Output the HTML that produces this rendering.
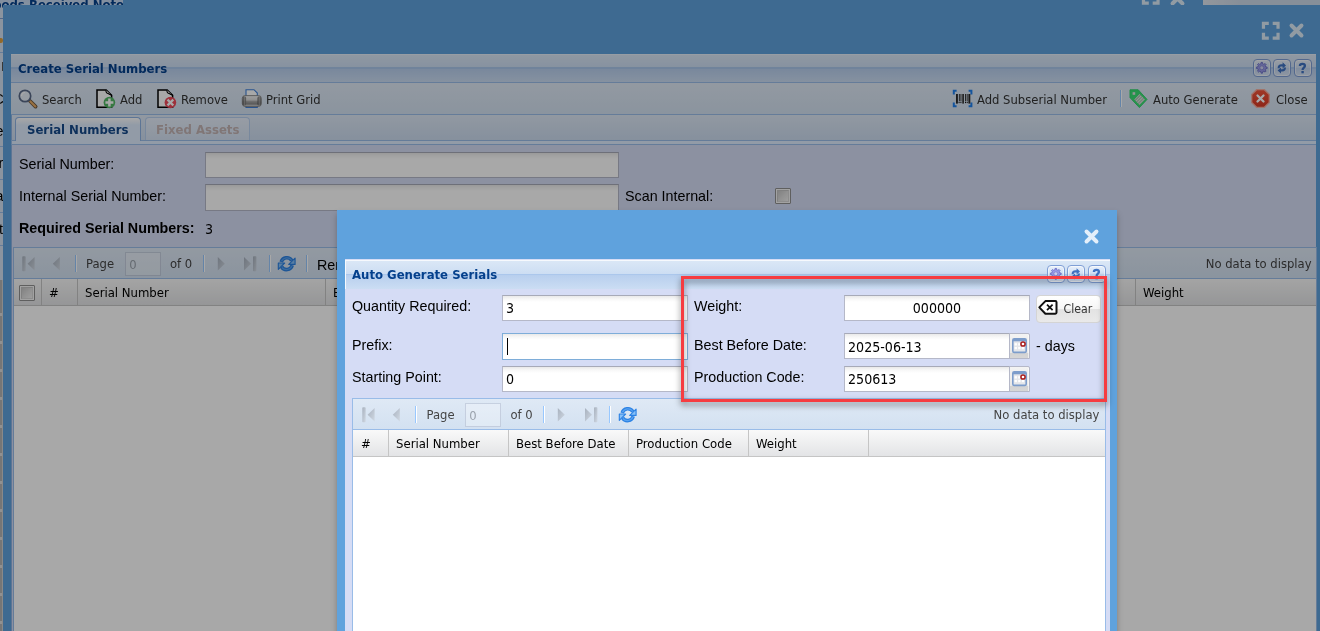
<!DOCTYPE html>
<html><head><meta charset="utf-8"><title>Create Serial Numbers</title>
<style>
*{box-sizing:border-box}
html,body{margin:0;padding:0}
body{width:1320px;height:631px;overflow:hidden;position:relative;background:#d3e1f1;font-family:"DejaVu Sans Condensed","DejaVu Sans","Liberation Sans",sans-serif;font-size:13px;color:#000}
.abs{position:absolute}
svg.abs{overflow:visible}
.layer{position:absolute;left:0;top:0;width:1320px;height:631px;will-change:transform}
.t{position:absolute;white-space:nowrap;line-height:16px;font-size:12.9px;color:#333}
.b{font-size:13px}
.ar{font-family:"Liberation Sans",sans-serif;font-size:14.3px;color:#000}
.b{font-weight:bold}
.hdr{background-image:linear-gradient(to bottom,#dae7f6 0%,#cddef3 45%,#abc7ec 46%,#abc7ec 50%,#b8cfee 51%,#cbddf3 100%)}
.tb{background-image:linear-gradient(to bottom,#dfe9f5,#d3e1f1)}
.sep{position:absolute;width:2px;border-left:1px solid #98c8ff;border-right:1px solid #fff}
.tool{position:absolute;width:18px;height:18px;border:1px solid #7f9fd6;border-radius:4px;background:linear-gradient(#e9f0fa,#cfdff4 50%,#c3d6f0 51%,#d9e5f6);box-shadow:inset 0 0 0 1px rgba(255,255,255,.55)}
.gh{position:absolute;top:0;height:100%;border-right:1px solid #c5c5c5;background-image:linear-gradient(to bottom,#f9f9f9,#e3e4e6);font-size:13px;line-height:16px;color:#000;padding:6px 0 0 7px;white-space:nowrap}
.inp{position:absolute;background:#fff linear-gradient(#e9e9e9 0,#f7f7f7 3px,#fff 6px) no-repeat;border:1px solid #b5b8c8;border-top-color:#a7aab8}
.dis{background:rgba(255,255,255,.28);border-color:rgba(160,170,195,.45)}
.trg{position:absolute;border:1px solid #b5b8c8;border-radius:0 2px 0 0;background:linear-gradient(#f3f3f3 0%,#e8e8e8 78%,#d3d3d3 80%,#d6d6d6 100%);box-shadow:inset -1px 0 0 rgba(255,255,255,.6)}
</style></head><body>
<!-- base application (behind modal mask) -->
<div class="layer" id="base">
<div class="abs hdr" style="left:0px;top:-23px;width:123px;height:28px;"></div>
<div class="t b" style="left:-16.2px;top:-2.8px;color:#04408c">Goods Received Note</div>
<div class="abs " style="left:0px;top:18px;width:4px;height:1px;background:#7f9fcf"></div>
<div class="abs " style="left:0px;top:52px;width:4px;height:1px;background:#99bce8"></div>
<div class="abs " style="left:0px;top:38px;width:2.5px;height:5px;background:#e0a040;border-radius:0 2px 2px 0"></div>
<div class="abs " style="left:1.5px;top:62px;width:1.5px;height:9px;background:#555"></div>
<div class="t ar" style="left:-6.5px;top:91px;">C</div>
<div class="t ar" style="left:-4.5px;top:123px;">e</div>
<div class="t ar" style="left:-1.5px;top:155px;">r</div>
<div class="t ar" style="left:-4.5px;top:188px;">a</div>
<div class="t ar" style="left:-1px;top:221px;">t</div>
<div class="abs " style="left:0px;top:146px;width:4px;height:1px;background:#99bce8"></div>
<div class="abs " style="left:0px;top:179px;width:4px;height:1px;background:#99bce8"></div>
<div class="abs " style="left:0px;top:212px;width:4px;height:1px;background:#99bce8"></div>
<div class="abs " style="left:0px;top:245px;width:4px;height:1px;background:#99bce8"></div>
<div class="abs " style="left:0px;top:280px;width:3px;height:360px;background:repeating-linear-gradient(to bottom,#b4b4b4 0,#b4b4b4 25px,#dcdcdc 25px,#dcdcdc 28px);background-position:0 8px;border-right:1px solid #d0d0d0"></div>
<div class="abs " style="left:123px;top:0px;width:1197px;height:6px;background:#5fa2dd"></div>
<div class="abs " style="left:1203px;top:-20px;width:130px;height:24.5px;background:linear-gradient(to right,#dfe5ee,#cdd9e8 30%)"></div>
<svg class="abs" style="left:1142px;top:-13px" width="17.5" height="17.5" viewBox="0 0 18 18" ><path d="M1.5,7V1.5H7M11,1.5H16.5V7M16.5,11V16.5H11M7,16.5H1.5V11" fill="none" stroke="#dcebf8" stroke-width="3.3"/></svg>
<svg class="abs" style="left:1169.5px;top:-9.5px" width="15" height="15" viewBox="0 0 15 15" ><path d="M2.5,2.5L12.5,12.5M12.5,2.5L2.5,12.5" fill="none" stroke="#dcebf8" stroke-width="3.9" stroke-linecap="round"/></svg>
<div class="abs " style="left:3px;top:5px;width:1330px;height:640px;background:#5fa2dd"></div>
<svg class="abs" style="left:1262px;top:22.2px" width="17.5" height="17.5" viewBox="0 0 18 18" ><path d="M1.5,7V1.5H7M11,1.5H16.5V7M16.5,11V16.5H11M7,16.5H1.5V11" fill="none" stroke="#dcebf8" stroke-width="3.3"/></svg>
<svg class="abs" style="left:1289px;top:23px" width="15" height="15" viewBox="0 0 15 15" ><path d="M2.5,2.5L12.5,12.5M12.5,2.5L2.5,12.5" fill="none" stroke="#dcebf8" stroke-width="3.9" stroke-linecap="round"/></svg>
<div class="abs " style="left:11px;top:54px;width:1305px;height:600px;background:#d5dcf5;border-left:1px solid #8db2e3"></div>
<div class="abs hdr" style="left:11px;top:54px;width:1305px;height:29px;border-bottom:1px solid #99bce8;border-top:1px solid #e6eef9"></div>
<div class="t b" style="left:18px;top:61px;color:#04408c">Create Serial Numbers</div>
<div class="tool" style="left:1253px;top:59px"></div><svg class="abs" style="left:1253px;top:59px" width="18" height="18" viewBox="0 0 18 18" ><path d="M7.87,4.91L8.08,3.45L9.52,3.45L9.73,4.91L10.89,5.39L12.08,4.51L13.09,5.52L12.21,6.71L12.69,7.87L14.15,8.08L14.15,9.52L12.69,9.73L12.21,10.89L13.09,12.08L12.08,13.09L10.89,12.21L9.73,12.69L9.52,14.15L8.08,14.15L7.87,12.69L6.71,12.21L5.52,13.09L4.51,12.08L5.39,10.89L4.91,9.73L3.45,9.52L3.45,8.08L4.91,7.87L5.39,6.71L4.51,5.52L5.52,4.51L6.71,5.39Z" fill="#9a9ceb" stroke="#6c6fc6" stroke-width=".9" stroke-linejoin="round"/><circle cx="8.8" cy="8.8" r="2" fill="#cfd2f3" stroke="#7d80d0" stroke-width=".8"/></svg>
<div class="tool" style="left:1273px;top:59px"></div><svg class="abs" style="left:1273px;top:59px" width="18" height="18" viewBox="0 0 18 18" ><path d="M4.6,9.2C4.6,6.6 6,5.3 8.4,5.3H9.6V3.3L13,6.4 9.6,9.4V7.5H8.4C7.2,7.5 6.7,8 6.7,9.2Z" fill="#3f72c2"/><path d="M13,8.6C13,11.2 11.6,12.5 9.2,12.5H8V14.5L4.6,11.4 8,8.4V10.3H9.2C10.4,10.3 10.9,9.8 10.9,8.6Z" fill="#3f72c2"/></svg>
<div class="tool" style="left:1294px;top:59px"></div><svg class="abs" style="left:1294px;top:59px" width="18" height="18" viewBox="0 0 18 18" ><path d="M5.9,6.9C5.9,5 7.1,4.9 8.5,4.9C9.9,4.9 10.9,5.6 10.9,6.9C10.9,8.6 8.6,8.6 8.6,10.9" fill="none" stroke="#3f72c2" stroke-width="2.3"/><rect x="7.4" y="12" width="2.4" height="2.3" fill="#3f72c2"/></svg>
<div class="abs tb" style="left:11px;top:83px;width:1305px;height:32px;border-bottom:1px solid #99bce8"></div>
<svg class="abs" style="left:18px;top:89px" width="20" height="20" viewBox="0 0 20 20" ><line x1="12" y1="12" x2="17.6" y2="17.6" stroke="#6b5640" stroke-width="3.8" stroke-linecap="round"/>
<line x1="12.4" y1="12.4" x2="17.4" y2="17.4" stroke="#e8ac64" stroke-width="2.1" stroke-linecap="round"/>
<circle cx="7" cy="7" r="5.7" fill="#e6edf6" stroke="#5a6a88" stroke-width="1.7"/>
<path d="M3.6,7 a3.6,3.6 0 0 1 3.4,-3.5" stroke="#fff" stroke-width="1.2" fill="none"/></svg>
<div class="t " style="left:42px;top:92px;">Search</div>
<svg class="abs" style="left:95.5px;top:88.6px" width="20" height="20" viewBox="0 0 20 20" ><path d="M1,1H10.2L15.6,6.3V18.2H1Z" fill="#fff" stroke="#000" stroke-width="1.5" stroke-linejoin="miter"/>
<path d="M10.2,1.2C9.4,2.6 10.6,4 12,4.6C13.2,5.2 14.6,5.4 15.4,6.2" fill="#fff" stroke="#000" stroke-width="1.1"/>
<circle cx="13.4" cy="13.5" r="5.8" fill="#52b865"/><path d="M9.4,13.5h8M13.4,9.5v8" stroke="#fff" stroke-width="2.5" fill="none"/></svg>
<div class="t " style="left:120px;top:92px;">Add</div>
<svg class="abs" style="left:156.5px;top:88.6px" width="20" height="20" viewBox="0 0 20 20" ><path d="M1,1H10.2L15.6,6.3V18.2H1Z" fill="#fff" stroke="#000" stroke-width="1.5" stroke-linejoin="miter"/>
<path d="M10.2,1.2C9.4,2.6 10.6,4 12,4.6C13.2,5.2 14.6,5.4 15.4,6.2" fill="#fff" stroke="#000" stroke-width="1.1"/>
<circle cx="13.4" cy="13.5" r="5.8" fill="#ee4a5a"/><path d="M10.5,10.6l5.8,5.8M16.3,10.6l-5.8,5.8" stroke="#fff" stroke-width="2.2" fill="none"/></svg>
<div class="t " style="left:181px;top:92px;">Remove</div>
<svg class="abs" style="left:242px;top:89px" width="20" height="20" viewBox="0 0 20 20" ><defs><linearGradient id="pg1" x1="0" y1="0" x2="0" y2="1"><stop offset="0" stop-color="#f2f2f2"/><stop offset=".4" stop-color="#dadada"/><stop offset=".55" stop-color="#a6a6a6"/><stop offset=".78" stop-color="#888"/><stop offset=".9" stop-color="#c6c6c6"/><stop offset="1" stop-color="#d0d0d0"/></linearGradient>
<linearGradient id="pg2" x1="0" y1="0" x2="1" y2="0"><stop offset="0" stop-color="#4c4c4c"/><stop offset=".55" stop-color="#9c9c9c"/><stop offset="1" stop-color="#5c5c5c"/></linearGradient></defs>
<path d="M4,.7H12L15.3,4V18.4H4Z" fill="#fff" stroke="#3f7fd8" stroke-width="1.1"/>
<rect x=".3" y="6.6" width="19" height="10.8" rx="2.8" fill="url(#pg1)" stroke="#737373" stroke-width=".8"/>
<rect x=".7" y="7.2" width="3.4" height="9.6" rx="1.7" fill="url(#pg2)" opacity=".8"/>
<rect x="15.5" y="7.2" width="3.4" height="9.6" rx="1.7" fill="url(#pg2)" opacity=".8"/></svg>
<div class="t " style="left:266px;top:92px;">Print Grid</div>
<svg class="abs" style="left:952.5px;top:89.5px" width="20" height="18" viewBox="0 0 20 18" ><path d="M3.6,.8H.8V4.4M.8,12.6V16.2H3.6M15.6,.8H18.4V4.4M18.4,12.6V16.2H15.6" fill="none" stroke="#1f80ee" stroke-width="2"/><rect x="3.0" y="4" width="1.9" height="9.6" fill="#2a2a2a"/><rect x="5.9" y="4" width="0.9" height="7.2" fill="#2a2a2a"/><rect x="7.5" y="4" width="0.9" height="7.2" fill="#2a2a2a"/><rect x="9.3" y="4" width="1.6" height="9.6" fill="#2a2a2a"/><rect x="12.1" y="4" width="0.9" height="7.2" fill="#2a2a2a"/><rect x="13.7" y="4" width="0.9" height="7.2" fill="#2a2a2a"/><rect x="15.4" y="4" width="1.9" height="9.6" fill="#2a2a2a"/><rect x="5.6" y="11.8" width="1" height="1.3" fill="#111"/><rect x="7.4" y="11.8" width="1" height="1.3" fill="#111"/><rect x="12.0" y="11.8" width="1" height="1.3" fill="#111"/><rect x="13.7" y="11.8" width="1" height="1.3" fill="#111"/></svg>
<div class="t " style="left:977px;top:92px;">Add Subserial Number</div>
<div class="sep" style="left:1120px;top:90px;height:17px"></div>
<svg class="abs" style="left:1128.5px;top:88.6px" width="20" height="20" viewBox="0 0 20 20" ><defs><pattern id="tgp" width="2.2" height="2.2" patternUnits="userSpaceOnUse" patternTransform="rotate(-45)"><rect width="2.2" height="1.1" fill="#ececec"/><rect y="1.1" width="2.2" height="1.1" fill="#bdbdbd"/></pattern></defs>
<path d="M1,.8H9.2L18,10.4 10.4,18.6 1,8.6Z" fill="#3adf74" stroke="#34d46c" stroke-width="1" stroke-linejoin="round"/>
<rect x="3.6" y="3.2" width="2.6" height="2.6" fill="#e3e3e3"/>
<path d="M10.6,5L16,10.5 10.5,16 5.3,10.5Z" fill="url(#tgp)"/></svg>
<div class="t " style="left:1153px;top:92px;">Auto Generate</div>
<svg class="abs" style="left:1250.6px;top:88.6px" width="19" height="19" viewBox="0 0 19 19" ><defs><linearGradient id="stg" x1="0" y1="0" x2="0" y2="1"><stop offset="0" stop-color="#f2553c"/><stop offset="1" stop-color="#d83a24"/></linearGradient></defs>
<path d="M5.6,.7H13.4L18.3,5.6V13.4L13.4,18.3H5.6L.7,13.4V5.6Z" fill="url(#stg)" stroke="#f5b0a2" stroke-width="1.3"/>
<path d="M6.5,6.5l6,6M12.5,6.5l-6,6" stroke="#fff" stroke-width="2.3" stroke-linecap="round"/></svg>
<div class="t " style="left:1276px;top:92px;">Close</div>
<div class="abs " style="left:11px;top:115px;width:1305px;height:26px;background-image:linear-gradient(to bottom,#dde8f5,#cbdbef);border-left:1px solid #8db2e3"></div>
<div class="abs " style="left:11px;top:140px;width:1305px;height:5px;background:#deecfd;border:1px solid #99bce8;border-right:0"></div>
<div class="abs " style="left:15px;top:116.5px;width:125.5px;height:24.5px;border:1px solid #8db2e3;border-bottom:0;border-radius:4px 4px 0 0;background:linear-gradient(#fff,#deecfd 30%)"></div>
<div class="t b" style="left:27px;top:122px;color:#15498b">Serial Numbers</div>
<div class="abs " style="left:144.5px;top:116.5px;width:105px;height:23.5px;border:1px solid #b7cfee;border-bottom:0;border-radius:4px 4px 0 0;background:linear-gradient(#e6eefa,#d5e2f3)"></div>
<div class="t b" style="left:156px;top:122px;color:#c3b3b3">Fixed Assets</div>
<div class="t ar" style="left:19px;top:156px;">Serial Number:</div>
<div class="inp " style="left:205px;top:152px;width:414px;height:26px;"></div>
<div class="t ar" style="left:19px;top:188px;">Internal Serial Number:</div>
<div class="inp " style="left:205px;top:184px;width:414px;height:26.5px;"></div>
<div class="t ar" style="left:625px;top:188px;">Scan Internal:</div>
<div class="abs " style="left:775px;top:188px;width:16px;height:16px;border:1px solid #909090;background:#f6f6f6;border-radius:1px"></div><div class="abs " style="left:777px;top:190px;width:12px;height:12px;border:1px solid #c2c2c2;border-right-color:#d6d6d6;border-bottom-color:#d6d6d6;background:linear-gradient(135deg,#c4c4c4 0%,#dcdcdc 50%,#efefef 100%)"></div>
<div class="t ar b" style="left:19px;top:220px;">Required Serial Numbers:</div>
<div class="t " style="left:205px;top:221px;font-size:14.1px;color:#000">3</div>
<div class="abs tb" style="left:13px;top:247px;width:1304px;height:32px;border:1px solid #99bce8"></div>
<svg class="abs" style="left:22.3px;top:255.6px" width="14" height="16" viewBox="0 0 14 16" opacity=".78"><defs><linearGradient id="pgg" x1="0" y1="0" x2="1" y2="1"><stop offset="0" stop-color="#9aa3b0"/><stop offset="1" stop-color="#cfd6df"/></linearGradient></defs><rect x=".3" y=".3" width="3.4" height="14.9" rx=".8" fill="url(#pgg)"/><path d="M12.6,1V14.6L5.6,7.8Z" fill="url(#pgg)"/></svg>
<svg class="abs" style="left:52px;top:255.6px" width="9" height="16" viewBox="0 0 9 16" opacity=".78"><defs><linearGradient id="pgg" x1="0" y1="0" x2="1" y2="1"><stop offset="0" stop-color="#9aa3b0"/><stop offset="1" stop-color="#cfd6df"/></linearGradient></defs><path d="M7.8,1V14.6L.8,7.8Z" fill="url(#pgg)"/></svg>
<div class="sep" style="left:75px;top:255px;height:17px"></div>
<div class="t " style="left:86px;top:256px;color:#444">Page</div>
<div class="inp dis" style="left:125px;top:252px;width:36px;height:24px;"></div>
<div class="t " style="left:129.2px;top:257px;color:#9ba3ad">0</div>
<div class="t " style="left:170px;top:256px;color:#444">of 0</div>
<div class="sep" style="left:203px;top:255px;height:17px"></div>
<svg class="abs" style="left:217px;top:255.6px" width="9" height="16" viewBox="0 0 9 16" opacity=".78"><defs><linearGradient id="pgg" x1="0" y1="0" x2="1" y2="1"><stop offset="0" stop-color="#9aa3b0"/><stop offset="1" stop-color="#cfd6df"/></linearGradient></defs><path d="M.8,1V14.6L7.8,7.8Z" fill="url(#pgg)"/></svg>
<svg class="abs" style="left:243px;top:255.6px" width="14" height="16" viewBox="0 0 14 16" opacity=".78"><defs><linearGradient id="pgg" x1="0" y1="0" x2="1" y2="1"><stop offset="0" stop-color="#9aa3b0"/><stop offset="1" stop-color="#cfd6df"/></linearGradient></defs><rect x="10" y=".3" width="3.4" height="14.9" rx=".8" fill="url(#pgg)"/><path d="M1,1V14.6L8,7.8Z" fill="url(#pgg)"/></svg>
<div class="sep" style="left:269px;top:255px;height:17px"></div>
<svg class="abs" style="left:278.3px;top:255px" width="17.4" height="17.4" viewBox="0 0 17 17" ><path d="M3.1,6.9A5.7,5.7 0 0 1 13.5,5.5" stroke="#2c82e4" stroke-width="3.5" fill="none"/>
<path d="M3.4,6.2A5.9,5.9 0 0 1 13.2,4.8" stroke="#5aa3f0" stroke-width="1.2" fill="none"/>
<path d="M16.7,3V9.2H10.5Z" fill="#86c0f8" stroke="#2c82e4" stroke-width="1.1" stroke-linejoin="round"/>
<path d="M13.9,10.1A5.7,5.7 0 0 1 3.5,11.5" stroke="#2c82e4" stroke-width="3.5" fill="none"/>
<path d="M13.6,10.8A5.9,5.9 0 0 1 3.8,12.2" stroke="#5aa3f0" stroke-width="1.2" fill="none"/>
<path d="M.3,14V7.8H6.5Z" fill="#86c0f8" stroke="#2c82e4" stroke-width="1.1" stroke-linejoin="round"/></svg>
<div class="sep" style="left:306px;top:255px;height:17px"></div>
<div class="t ar" style="left:317px;top:257px;">Remaining: 3</div>
<div class="t " style="left:1205.8px;top:256px;color:#444">No data to display</div>
<div class="abs " style="left:13px;top:278px;width:1304px;height:360px;background:#fff;border:1px solid #99bce8"></div>
<div class="abs" style="left:14px;top:279px;width:1302px;height:27px;background-image:linear-gradient(to bottom,#f9f9f9,#e3e4e6);border-bottom:1px solid #c5c5c5"><div class="gh" style="left:0;width:28px"></div><div class="gh" style="left:28px;width:36px;padding-left:7px">#</div><div class="gh" style="left:64px;width:248px">Serial Number</div><div class="gh" style="left:312px;width:200px">Best Before Date</div><div class="gh" style="left:1000px;width:122px">Production Code</div><div class="gh" style="left:1122px;width:180px;border-right:0">Weight</div></div>
<div class="abs " style="left:18.7px;top:285px;width:16px;height:16px;border:1px solid #909090;background:#f6f6f6;border-radius:1px"></div><div class="abs " style="left:20.7px;top:287px;width:12px;height:12px;border:1px solid #c2c2c2;border-right-color:#d6d6d6;border-bottom-color:#d6d6d6;background:linear-gradient(135deg,#c4c4c4 0%,#dcdcdc 50%,#efefef 100%)"></div>
</div>
<!-- modal mask -->
<div class="layer" style="background:rgba(0,0,0,.34)"></div>
<!-- Auto Generate Serials window -->
<div class="layer">
<div id="win" class="abs" style="left:337px;top:210px;width:780px;height:430px;background:#5fa2dd;box-shadow:0 4px 6px rgba(0,0,0,.26)">
<svg class="abs" style="left:746.5px;top:18.5px" width="15" height="15" viewBox="0 0 15 15" ><path d="M2.5,2.5L12.5,12.5M12.5,2.5L2.5,12.5" fill="none" stroke="#e4effa" stroke-width="3.9" stroke-linecap="round"/></svg>
<div class="abs " style="left:8px;top:49px;width:765px;height:400px;background:#d5dcf5"></div>
<div class="abs hdr" style="left:8px;top:49.5px;width:765px;height:29.5px;border-top:1px solid #f6f9fd;border-left:1px solid #f6f9fd"></div>
<div class="t b" style="left:15px;top:57px;color:#04408c">Auto Generate Serials</div>
<div class="tool" style="left:710px;top:55px"></div><svg class="abs" style="left:710px;top:55px" width="18" height="18" viewBox="0 0 18 18" ><path d="M7.87,4.91L8.08,3.45L9.52,3.45L9.73,4.91L10.89,5.39L12.08,4.51L13.09,5.52L12.21,6.71L12.69,7.87L14.15,8.08L14.15,9.52L12.69,9.73L12.21,10.89L13.09,12.08L12.08,13.09L10.89,12.21L9.73,12.69L9.52,14.15L8.08,14.15L7.87,12.69L6.71,12.21L5.52,13.09L4.51,12.08L5.39,10.89L4.91,9.73L3.45,9.52L3.45,8.08L4.91,7.87L5.39,6.71L4.51,5.52L5.52,4.51L6.71,5.39Z" fill="#9a9ceb" stroke="#6c6fc6" stroke-width=".9" stroke-linejoin="round"/><circle cx="8.8" cy="8.8" r="2" fill="#cfd2f3" stroke="#7d80d0" stroke-width=".8"/></svg>
<div class="tool" style="left:730px;top:55px"></div><svg class="abs" style="left:730px;top:55px" width="18" height="18" viewBox="0 0 18 18" ><path d="M4.6,9.2C4.6,6.6 6,5.3 8.4,5.3H9.6V3.3L13,6.4 9.6,9.4V7.5H8.4C7.2,7.5 6.7,8 6.7,9.2Z" fill="#3f72c2"/><path d="M13,8.6C13,11.2 11.6,12.5 9.2,12.5H8V14.5L4.6,11.4 8,8.4V10.3H9.2C10.4,10.3 10.9,9.8 10.9,8.6Z" fill="#3f72c2"/></svg>
<div class="tool" style="left:751px;top:55px"></div><svg class="abs" style="left:751px;top:55px" width="18" height="18" viewBox="0 0 18 18" ><path d="M5.9,6.9C5.9,5 7.1,4.9 8.5,4.9C9.9,4.9 10.9,5.6 10.9,6.9C10.9,8.6 8.6,8.6 8.6,10.9" fill="none" stroke="#3f72c2" stroke-width="2.3"/><rect x="7.4" y="12" width="2.4" height="2.3" fill="#3f72c2"/></svg>
<div class="t ar" style="left:15px;top:88.30000000000001px;">Quantity Required:</div>
<div class="inp " style="left:165px;top:85px;width:186px;height:26px;"></div>
<div class="t " style="left:169px;top:90px;font-size:14.1px;color:#000">3</div>
<div class="t ar" style="left:15px;top:127px;">Prefix:</div>
<div class="inp " style="left:165px;top:123.39999999999998px;width:186px;height:26.2px;border-color:#7eadd9"></div>
<div class="abs " style="left:170px;top:128px;width:1px;height:17px;background:#000"></div>
<div class="t ar" style="left:15px;top:159px;">Starting Point:</div>
<div class="inp " style="left:165px;top:156px;width:186px;height:26px;"></div>
<div class="t " style="left:169px;top:161px;font-size:14.1px;color:#000">0</div>
<div class="t ar" style="left:357px;top:87.5px;">Weight:</div>
<div class="inp " style="left:507px;top:85px;width:186px;height:26px;"></div>
<div class="t " style="left:507px;top:90px;width:186px;text-align:center;font-size:14.1px;color:#000">000000</div>
<div class="abs " style="left:699px;top:85px;width:65px;height:28px;border:1px solid #d4d4d4;border-radius:4px;background:linear-gradient(#fff 0%,#f6f6f6 50%,#e3e3e3 51%,#e9e9e9 100%)"></div>
<svg class="abs" style="left:701.4000000000001px;top:90px" width="20" height="15" viewBox="0 0 20 15" ><path d="M7.4,1.1H17.4Q18.5,1.1 18.5,2.2V12.6Q18.5,13.7 17.4,13.7H7.4L1.3,7.4Z" fill="#fff" stroke="#111" stroke-width="2" stroke-linejoin="round"/><path d="M9,4.6l5.6,5.6M14.6,4.6l-5.6,5.6" stroke="#111" stroke-width="1.7"/></svg>
<div class="t " style="left:726.5999999999999px;top:91.30000000000001px;font-size:12.2px">Clear</div>
<div class="t ar" style="left:357px;top:127px;">Best Before Date:</div>
<div class="inp " style="left:507px;top:123px;width:166px;height:26.4px;"></div>
<div class="t " style="left:511px;top:129px;font-size:14.1px;color:#000">2025-06-13</div>
<div class="abs trg" style="left:672px;top:123px;width:21px;height:26.4px;"></div>
<svg class="abs" style="left:675px;top:128px" width="15" height="15" viewBox="0 0 15 15" ><rect x=".8" y=".8" width="13.4" height="13.6" rx="1.4" fill="#e4e6ea" stroke="#7d9dcb" stroke-width="1.6"/><rect x="1" y="1" width="13" height="2.3" fill="#7d9dcb"/><rect x="2.6" y="5.2" width="2.3" height="2.3" fill="#fff"/><rect x="6.2" y="5.2" width="2.3" height="2.3" fill="#fff"/><rect x="9.8" y="5.2" width="2.3" height="2.3" fill="#fff"/><rect x="2.6" y="8.9" width="2.3" height="2.3" fill="#fff"/><rect x="6.2" y="8.9" width="2.3" height="2.3" fill="#fff"/><rect x="9.8" y="8.9" width="2.3" height="2.3" fill="#fff"/>
<circle cx="11" cy="6" r="2.1" fill="#fff" stroke="#a81c1c" stroke-width="1.5"/></svg>
<div class="t ar" style="left:699px;top:128px;">- days</div>
<div class="t ar" style="left:357px;top:159px;">Production Code:</div>
<div class="inp " style="left:507px;top:156px;width:166px;height:26px;"></div>
<div class="t " style="left:511px;top:161px;font-size:14.1px;color:#000">250613</div>
<div class="abs trg" style="left:672px;top:156px;width:21px;height:26px;"></div>
<svg class="abs" style="left:675px;top:160.7px" width="15" height="15" viewBox="0 0 15 15" ><rect x=".8" y=".8" width="13.4" height="13.6" rx="1.4" fill="#e4e6ea" stroke="#7d9dcb" stroke-width="1.6"/><rect x="1" y="1" width="13" height="2.3" fill="#7d9dcb"/><rect x="2.6" y="5.2" width="2.3" height="2.3" fill="#fff"/><rect x="6.2" y="5.2" width="2.3" height="2.3" fill="#fff"/><rect x="9.8" y="5.2" width="2.3" height="2.3" fill="#fff"/><rect x="2.6" y="8.9" width="2.3" height="2.3" fill="#fff"/><rect x="6.2" y="8.9" width="2.3" height="2.3" fill="#fff"/><rect x="9.8" y="8.9" width="2.3" height="2.3" fill="#fff"/>
<circle cx="11" cy="6" r="2.1" fill="#fff" stroke="#a81c1c" stroke-width="1.5"/></svg>
<div class="abs tb" style="left:15px;top:188px;width:754px;height:32px;border:1px solid #99bce8"></div>
<svg class="abs" style="left:25px;top:196.8px" width="14" height="16" viewBox="0 0 14 16" opacity=".78"><defs><linearGradient id="pgg" x1="0" y1="0" x2="1" y2="1"><stop offset="0" stop-color="#9aa3b0"/><stop offset="1" stop-color="#cfd6df"/></linearGradient></defs><rect x=".3" y=".3" width="3.4" height="14.9" rx=".8" fill="url(#pgg)"/><path d="M12.6,1V14.6L5.6,7.8Z" fill="url(#pgg)"/></svg>
<svg class="abs" style="left:55px;top:196.8px" width="9" height="16" viewBox="0 0 9 16" opacity=".78"><defs><linearGradient id="pgg" x1="0" y1="0" x2="1" y2="1"><stop offset="0" stop-color="#9aa3b0"/><stop offset="1" stop-color="#cfd6df"/></linearGradient></defs><path d="M7.8,1V14.6L.8,7.8Z" fill="url(#pgg)"/></svg>
<div class="sep" style="left:78px;top:196px;height:17px"></div>
<div class="t " style="left:89.5px;top:197px;color:#444">Page</div>
<div class="inp dis" style="left:128px;top:193px;width:36px;height:24px;"></div>
<div class="t " style="left:132.2px;top:198px;color:#9ba3ad">0</div>
<div class="t " style="left:173.5px;top:197px;color:#444">of 0</div>
<div class="sep" style="left:206px;top:196px;height:17px"></div>
<svg class="abs" style="left:220px;top:196.8px" width="9" height="16" viewBox="0 0 9 16" opacity=".78"><defs><linearGradient id="pgg" x1="0" y1="0" x2="1" y2="1"><stop offset="0" stop-color="#9aa3b0"/><stop offset="1" stop-color="#cfd6df"/></linearGradient></defs><path d="M.8,1V14.6L7.8,7.8Z" fill="url(#pgg)"/></svg>
<svg class="abs" style="left:247px;top:196.8px" width="14" height="16" viewBox="0 0 14 16" opacity=".78"><defs><linearGradient id="pgg" x1="0" y1="0" x2="1" y2="1"><stop offset="0" stop-color="#9aa3b0"/><stop offset="1" stop-color="#cfd6df"/></linearGradient></defs><rect x="10" y=".3" width="3.4" height="14.9" rx=".8" fill="url(#pgg)"/><path d="M1,1V14.6L8,7.8Z" fill="url(#pgg)"/></svg>
<div class="sep" style="left:272px;top:196px;height:17px"></div>
<svg class="abs" style="left:282px;top:195.8px" width="17.4" height="17.4" viewBox="0 0 17 17" ><path d="M3.1,6.9A5.7,5.7 0 0 1 13.5,5.5" stroke="#2c82e4" stroke-width="3.5" fill="none"/>
<path d="M3.4,6.2A5.9,5.9 0 0 1 13.2,4.8" stroke="#5aa3f0" stroke-width="1.2" fill="none"/>
<path d="M16.7,3V9.2H10.5Z" fill="#86c0f8" stroke="#2c82e4" stroke-width="1.1" stroke-linejoin="round"/>
<path d="M13.9,10.1A5.7,5.7 0 0 1 3.5,11.5" stroke="#2c82e4" stroke-width="3.5" fill="none"/>
<path d="M13.6,10.8A5.9,5.9 0 0 1 3.8,12.2" stroke="#5aa3f0" stroke-width="1.2" fill="none"/>
<path d="M.3,14V7.8H6.5Z" fill="#86c0f8" stroke="#2c82e4" stroke-width="1.1" stroke-linejoin="round"/></svg>
<div class="t " style="left:656.6px;top:197px;color:#444">No data to display</div>
<div class="abs " style="left:15px;top:219px;width:754px;height:230px;background:#fff;border:1px solid #99bce8"></div>
<div class="abs" style="left:16px;top:220px;width:752px;height:27px;background-image:linear-gradient(to bottom,#f9f9f9,#e3e4e6);border-bottom:1px solid #c5c5c5"><div class="gh" style="left:0;width:36px;padding-left:8px">#</div><div class="gh" style="left:36px;width:120px">Serial Number</div><div class="gh" style="left:156px;width:120px">Best Before Date</div><div class="gh" style="left:276px;width:120px">Production Code</div><div class="gh" style="left:396px;width:120px">Weight</div></div>
<div class="abs " style="left:344px;top:66px;width:426px;height:126px;border:3px solid #f63c40;filter:drop-shadow(0 3px 3px rgba(0,0,0,.5))"></div>
</div>
</div>
</body></html>
